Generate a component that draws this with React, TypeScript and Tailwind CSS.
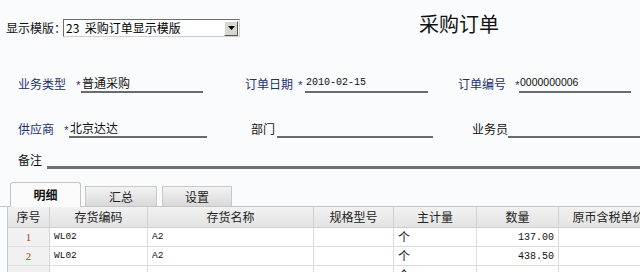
import React from 'react';

const cjk = "font-['Noto_Sans_CJK_SC','Noto_Sans',sans-serif]";
const mono = "font-['Liberation_Mono','Noto_Sans_CJK_SC',monospace]";

const rows = [
  { no: '1', code: 'WL02', name: 'A2', unit: '个', qty: '137.00' },
  { no: '2', code: 'WL02', name: 'A2', unit: '个', qty: '438.50' },
  { no: '', code: '', name: '', unit: '个', qty: '' },
];

const headers = ['序号', '存货编码', '存货名称', '规格型号', '主计量', '数量', '原币含税单价'];

function Star({ w }: { w: string }) {
  return (
    <span className={`${w} h-[18px] flex items-center pt-[5px] pl-[1px] text-[11px] text-[#22306e] ${mono}`}>*</span>
  );
}

function App() {
  return (
    <div className={`w-[640px] h-[272px] overflow-hidden bg-[#fafbfd] text-[12px] text-[#111] ${cjk}`}>
      {/* top bar */}
      <div className="flex items-start h-[60px]">
        <div className="flex items-center mt-[19px] ml-[6px]">
          <span className="w-[57px] leading-[18px] whitespace-nowrap">显示模版：</span>
          <div className="flex items-center w-[177px] h-[18px] bg-white border border-[#6e6e6e] border-b-[#cfcfcf] border-r-[#cfcfcf]">
            <span className="flex-1 pl-[2px] leading-[16px] text-[12px] text-black whitespace-pre">23  采购订单显示模版</span>
            <div className="flex items-center justify-center w-[14px] h-[15px] mr-[1px] bg-[#d8d6d0] border border-t-white border-l-white border-b-[#555] border-r-[#555]">
              <svg width="7" height="4" viewBox="0 0 7 4"><path d="M0 0h7L3.5 4z" fill="#000" /></svg>
            </div>
          </div>
        </div>
        <h1 className="ml-[179px] mt-[10px] text-[20px] leading-[28px] text-[#111] whitespace-nowrap">采购订单</h1>
      </div>

      {/* row 1 */}
      <div className="flex items-end h-[18px] mt-[15px]">
        <span className="ml-[18px] w-[56px] leading-[18px] text-[#22306e]">业务类型</span>
        <Star w="w-[7px]" />
        <div className="w-[122px] h-[18px] border-b-2 border-[#6a6a6a] leading-[16px] pl-[1px]">普通采购</div>
        <span className="ml-[42px] w-[51px] leading-[18px] text-[#22306e]">订单日期</span>
        <Star w="w-[9px]" />
        <div className={`w-[123px] h-[18px] border-b-2 border-[#6a6a6a] leading-[16px] pl-[1px] text-[10px] ${mono}`}>2010-02-15</div>
        <span className="ml-[30px] w-[55px] leading-[18px] text-[#22306e]">订单编号</span>
        <Star w="w-[6px]" />
        <div className="w-[112px] h-[18px] border-b-2 border-[#6a6a6a] leading-[15px] pl-[1px] text-[10.5px] font-['Liberation_Sans',sans-serif]">0000000006</div>
      </div>

      {/* row 2 */}
      <div className="flex items-end h-[18px] mt-[27px]">
        <span className="ml-[18px] w-[44px] leading-[18px] text-[#22306e]">供应商</span>
        <Star w="w-[7px]" />
        <div className="w-[138px] h-[18px] border-b-2 border-[#6a6a6a] leading-[16px] pl-[1px]">北京达达</div>
        <span className="ml-[44px] w-[26px] leading-[18px]">部门</span>
        <div className="w-[156px] h-[18px] border-b-2 border-[#6a6a6a]" />
        <span className="ml-[39px] w-[36px] leading-[18px]">业务员</span>
        <div className="flex-1 h-[18px] border-b-2 border-[#6a6a6a]" />
      </div>

      {/* row 3 */}
      <div className="flex items-end h-[18px] mt-[13px]">
        <span className="ml-[18px] w-[29px] leading-[18px]">备注</span>
        <div className="flex-1 h-[18px] border-b-[3px] border-[#707070]" />
      </div>

      {/* tabs */}
      <div className="flex items-end h-[25px] mt-[13px] pl-[10px] border-b border-[#c4c4c4]">
        <div className="w-[71px] h-[25px] -mb-px flex items-center justify-center bg-[#fbfbfb] border border-b-0 border-[#c4c4c4] rounded-t-[3px] font-bold text-[#111]">
          明细
        </div>
        <div className="ml-[4px] w-[72px] h-[20px] flex items-center justify-center bg-gradient-to-b from-[#f3f3f3] to-[#d9d9d9] border border-b-0 border-[#c8c8c8] text-[#222]">
          汇总
        </div>
        <div className="ml-[5px] w-[70px] h-[20px] flex items-center justify-center bg-gradient-to-b from-[#f3f3f3] to-[#d9d9d9] border border-b-0 border-[#c8c8c8] text-[#222]">
          设置
        </div>
      </div>

      {/* table */}
      <div className="ml-[7px] border-l border-[#c8c8c8]">
        <div className="grid grid-cols-[42px_98px_166px_80px_83px_82px_100px] h-[21px] bg-gradient-to-b from-[#f2f2f2] to-[#e3e3e3] border-b border-[#cfcfcf]">
          {headers.map((h) => (
            <div key={h} className="flex items-center justify-center border-r border-[#d2d2d2] text-[#222] whitespace-nowrap">
              {h}
            </div>
          ))}
        </div>
        {rows.map((r, i) => (
          <div key={i} className="grid grid-cols-[42px_98px_166px_80px_83px_82px_100px] h-[19px] border-b border-[#dcdcdc]">
            <div className="flex items-center justify-center bg-[#f1f1f1] border-r border-[#d6d6d6] text-[11px] text-[#c0392b] font-['Liberation_Serif',serif]">
              {r.no}
            </div>
            <div className={`flex items-center pl-[4px] bg-white border-r border-[#dcdcdc] text-[9.5px] ${mono}`}>{r.code}</div>
            <div className={`flex items-center pl-[4px] bg-white border-r border-[#dcdcdc] text-[9.5px] ${mono}`}>{r.name}</div>
            <div className="bg-white border-r border-[#dcdcdc]" />
            <div className="flex items-start pt-[1px] pl-[4px] bg-white border-r border-[#dcdcdc] text-[12px] leading-[16px]">{r.unit}</div>
            <div className={`flex items-center justify-end pr-[4px] bg-white border-r border-[#dcdcdc] text-[10px] ${mono}`}>{r.qty}</div>
            <div className="bg-white" />
          </div>
        ))}
      </div>
    </div>
  );
}

export default App;
